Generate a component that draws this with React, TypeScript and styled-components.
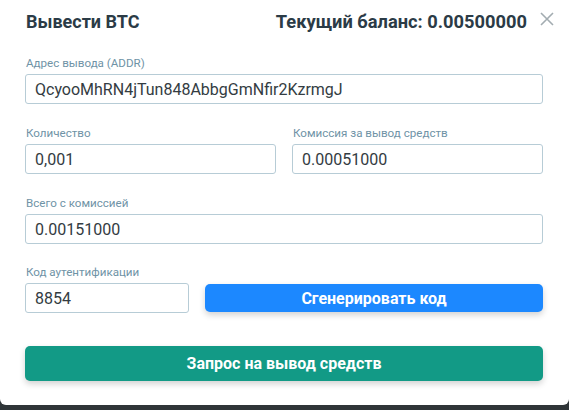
import React from "react";
import styled, { createGlobalStyle } from "styled-components";

const Global = createGlobalStyle`
  html, body { margin: 0; padding: 0; }
  body {
    background: #2f3538;
    font-family: Roboto, "Noto Sans", Arial, sans-serif;
  }
`;

const Modal = styled.div`
  box-sizing: border-box;
  width: 569px;
  height: 405px;
  background: #ffffff;
  border-radius: 0 0 6px 6px;
  padding: 8px 26px 0 25px;
  display: flex;
  flex-direction: column;
`;

const Header = styled.div`
  display: flex;
  align-items: center;
  height: 26px;
  margin-bottom: 22px;
`;

const Title = styled.h2`
  margin: 0;
  flex: 1;
  font-size: 18px;
  font-weight: 700;
  color: #2b3b46;
  padding-left: 1px;
`;

const Balance = styled.div`
  font-size: 18.3px;
  font-weight: 700;
  color: #2b3b46;
`;

const Close = styled.button`
  border: 0;
  background: none;
  padding: 0;
  margin: 0 -16px 0 12px;
  width: 20px;
  height: 20px;
  color: #a3acb1;
  cursor: pointer;
  display: flex;
  align-items: center;
  justify-content: center;
  position: relative;
  top: -2px;
  left: -2px;
`;

const Row = styled.div`
  display: flex;
  gap: 16px;
  margin-bottom: 22px;
`;

const Field = styled.div`
  display: flex;
  flex-direction: column;
  flex: 1;
`;

const Label = styled.label`
  font-size: 11.6px;
  line-height: 14px;
  color: #6f93a6;
  margin-bottom: 4px;
  padding-left: 1px;
`;

const Input = styled.input`
  box-sizing: border-box;
  height: 30px;
  width: 100%;
  border: 1px solid #b7ccd6;
  border-radius: 3px;
  padding: 0 9px;
  font-family: Roboto, "Noto Sans", Arial, sans-serif;
  font-size: 16px;
  color: #333c42;
  background: #fff;
  outline: none;
`;

const CodeRow = styled.div`
  display: flex;
  align-items: flex-end;
  gap: 16px;
  margin-bottom: 33px;
  margin-top: -1px;
`;

const CodeField = styled.div`
  display: flex;
  flex-direction: column;
  width: 164px;
`;

const Button = styled.button<{ $color: string; $h: number }>`
  border: 0;
  border-radius: 5px;
  background: ${(p) => p.$color};
  color: #fff;
  font-family: Roboto, "Noto Sans", Arial, sans-serif;
  font-weight: 700;
  font-size: 16px;
  height: ${(p) => p.$h}px;
  box-shadow: 0 3px 6px rgba(0, 0, 0, 0.18);
  cursor: pointer;
`;

const GenButton = styled(Button)`
  flex: 1;
  margin-bottom: 1px;
`;

const SubmitButton = styled(Button)`
  width: 100%;
`;

export default function App() {
  return (
    <>
      <Global />
      <Modal>
        <Header>
          <Title>Вывести BTC</Title>
          <Balance>Текущий баланс: 0.00500000</Balance>
          <Close aria-label="close">
            <svg width="14" height="14" viewBox="0 0 14 14">
              <path d="M1 1L13 13M13 1L1 13" stroke="currentColor" strokeWidth="1.6" />
            </svg>
          </Close>
        </Header>
        <Row>
          <Field>
            <Label>Адрес вывода (ADDR)</Label>
            <Input defaultValue="QcyooMhRN4jTun848AbbgGmNfir2KzrmgJ" />
          </Field>
        </Row>
        <Row>
          <Field>
            <Label>Количество</Label>
            <Input defaultValue="0,001" />
          </Field>
          <Field>
            <Label>Комиссия за вывод средств</Label>
            <Input defaultValue="0.00051000" />
          </Field>
        </Row>
        <Row>
          <Field>
            <Label>Всего с комиссией</Label>
            <Input defaultValue="0.00151000" />
          </Field>
        </Row>
        <CodeRow>
          <CodeField>
            <Label>Код аутентификации</Label>
            <Input defaultValue="8854" />
          </CodeField>
          <GenButton $color="#1c88ff" $h={28}>Сгенерировать код</GenButton>
        </CodeRow>
        <SubmitButton $color="#129a86" $h={35}>Запрос на вывод средств</SubmitButton>
      </Modal>
    </>
  );
}
